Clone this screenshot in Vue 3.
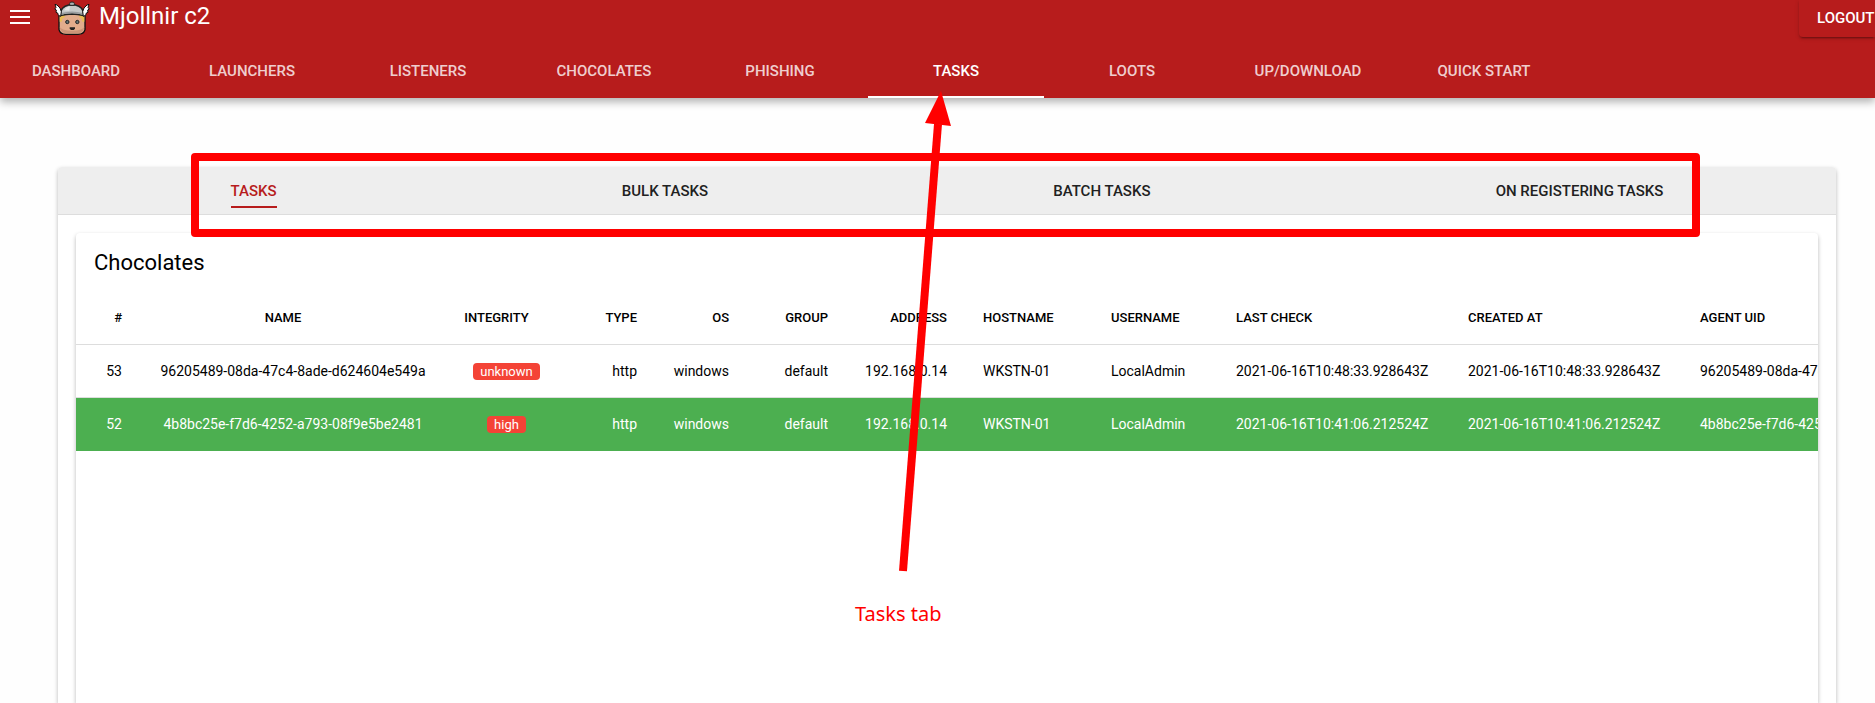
<script setup>
const navTabs = ['Dashboard', 'Launchers', 'Listeners', 'Chocolates', 'Phishing', 'Tasks', 'Loots', 'Up/Download', 'Quick start']
const sections = ['Tasks', 'Bulk tasks', 'Batch tasks', 'On registering tasks']

const columns = [
  { key: 'id', label: '#', align: 'right' },
  { key: 'name', label: 'Name', align: 'center' },
  { key: 'integrity', label: 'Integrity', align: 'center' },
  { key: 'type', label: 'Type', align: 'right' },
  { key: 'os', label: 'OS', align: 'right' },
  { key: 'group', label: 'Group', align: 'right' },
  { key: 'address', label: 'Address', align: 'right' },
  { key: 'hostname', label: 'Hostname', align: 'left' },
  { key: 'username', label: 'Username', align: 'left' },
  { key: 'lastCheck', label: 'Last check', align: 'left' },
  { key: 'createdAt', label: 'Created at', align: 'left' },
  { key: 'uid', label: 'Agent UID', align: 'left' }
]

const shared = { type: 'http', os: 'windows', group: 'default', address: '192.168.0.14', hostname: 'WKSTN-01', username: 'LocalAdmin' }
const rows = [
  {
    ...shared,
    id: 53,
    name: '96205489-08da-47c4-8ade-d624604e549a',
    integrity: 'unknown',
    lastCheck: '2021-06-16T10:48:33.928643Z',
    createdAt: '2021-06-16T10:48:33.928643Z',
    uid: '96205489-08da-47c4-8ade-d624604e549a'
  },
  {
    ...shared,
    id: 52,
    name: '4b8bc25e-f7d6-4252-a793-08f9e5be2481',
    integrity: 'high',
    lastCheck: '2021-06-16T10:41:06.212524Z',
    createdAt: '2021-06-16T10:41:06.212524Z',
    uid: '4b8bc25e-f7d6-4252-a793-08f9e5be2481',
    elevated: true
  }
]
</script>

<template>
  <div class="page">
    <header class="appbar">
      <div class="toolbar">
        <button class="menu" type="button" aria-label="Open menu">
          <svg width="20" height="14" viewBox="0 0 20 14" fill="#fff">
            <path d="M0 0h20v2H0zM0 6h20v2H0zM0 12h20v2H0z" />
          </svg>
        </button>
        <svg class="logo" width="36" height="34" viewBox="0 0 108 102" aria-hidden="true">
          <path d="M15 44 Q15 40 20 40 H88 Q93 40 93 45 V86 Q90 100 72 100 H36 Q18 100 15 86 Z" fill="#e2ac8c" stroke="#111" stroke-width="4" />
          <path d="M17 78 Q20 97 38 97 H70 Q88 97 91 78 Q84 89 54 89 Q24 89 17 78Z" fill="#cb9478" />
          <path d="M17 42h16l-2 8-5 2-3 10h-6zM91 42H75l2 8 5 2 3 10h6z" fill="#e9bd55" />
          <path d="M19 41 Q20 17 44 12 H64 Q88 17 89 41 V44 Q54 34 19 44Z" fill="#c6c8c8" stroke="#222" stroke-width="4" />
          <path d="M30 28 Q36 18 48 16 L46 29Z" fill="#e5e7e7" />
          <path d="M22 36 Q54 27 86 36 V41 Q54 33 22 41Z" fill="#999d9f" />
          <path d="M47 13V7q0-4 7-4t7 4v6z" fill="#aeb1b2" stroke="#222" stroke-width="3" />
          <path d="M3 10 9 12 18 21 22 32 20 46 13 43 11 36 6 34 7 27 2 24 6 20Z" fill="#fff" stroke="#111" stroke-width="3" />
          <path d="M105 10 99 12 90 21 86 32 88 46 95 43 97 36 102 34 101 27 106 24 102 20Z" fill="#fff" stroke="#111" stroke-width="3" />
          <circle cx="40" cy="63" r="5" fill="#677" stroke="#222" stroke-width="3" />
          <circle cx="70" cy="63" r="5" fill="#677" stroke="#222" stroke-width="3" />
          <path d="M47 79h16v4l-4 4h-8l-4-4z" fill="#222" />
        </svg>
        <span class="brand">Mjollnir c2</span>
        <button class="logout" type="button">LOGOUT</button>
      </div>
      <nav class="nav">
        <a v-for="tab in navTabs" :key="tab" href="#" :class="{ current: tab === 'Tasks' }">{{ tab.toUpperCase() }}</a>
      </nav>
    </header>

    <main class="panel">
      <div class="sections">
        <a v-for="(item, i) in sections" :key="item" href="#" :class="{ current: i === 0 }">{{ item.toUpperCase() }}</a>
      </div>
      <section class="card">
        <h1>Chocolates</h1>
        <table>
          <colgroup>
            <col v-for="col in columns" :key="col.key" :class="'col-' + col.key">
          </colgroup>
          <thead>
            <tr>
              <th v-for="col in columns" :key="col.key" scope="col" :class="col.align">{{ col.label.toUpperCase() }}</th>
            </tr>
          </thead>
          <tbody>
            <tr v-for="row in rows" :key="row.id" :class="{ elevated: row.elevated }">
              <td v-for="col in columns" :key="col.key" :class="col.align">
                <span v-if="col.key === 'integrity'" class="badge">{{ row.integrity }}</span>
                <template v-else>{{ row[col.key] }}</template>
              </td>
            </tr>
          </tbody>
        </table>
      </section>
    </main>

    <svg class="marks" width="1875" height="703" viewBox="0 0 1875 703" aria-hidden="true">
      <rect x="195" y="157" width="1501" height="76" fill="none" stroke="#f00" stroke-width="8" stroke-linejoin="round" />
      <path d="M938 124 903 571" stroke="#f00" stroke-width="8" />
      <path d="M941 91 925 123 951 126Z" fill="#f00" />
    </svg>
    <span class="note">Tasks tab</span>
  </div>
</template>

<style>
body {
  margin: 0;
  background: #fefefe;
}
</style>

<style scoped>
.page {
  position: relative;
  display: flex;
  flex-direction: column;
  min-height: 100vh;
  overflow: hidden;
  font-family: Roboto, "Liberation Sans", sans-serif;
  color: #000;
}
.page *,
.page {
  box-sizing: border-box;
}
a {
  text-decoration: none;
}
button {
  border: 0;
  padding: 0;
  font-family: inherit;
  background: none;
}
.appbar {
  background: #b71c1c;
  color: #fff;
  box-shadow: 0 4px 8px rgba(0, 0, 0, 0.3);
}
.toolbar {
  display: flex;
  align-items: flex-start;
  height: 44px;
  padding-left: 10px;
}
.menu {
  display: flex;
  padding-top: 10px;
}
.logo {
  margin: 1px 9px 0 24px;
}
.brand {
  font-size: 24px;
  line-height: 32px;
}
.logout {
  height: 37px;
  width: 76px;
  margin-left: auto;
  padding-left: 18px;
  border-radius: 0 0 0 4px;
  color: #fff;
  font-size: 15px;
  font-weight: 500;
  line-height: 35px;
  text-align: left;
  background: #b71c1c;
  box-shadow: 0 3px 1px -2px rgba(0, 0, 0, 0.2), 0 2px 2px rgba(0, 0, 0, 0.14), 0 1px 5px rgba(0, 0, 0, 0.12);
}
.nav {
  display: flex;
  height: 54px;
  margin-left: -12px;
}
.nav a {
  flex: 0 0 176px;
  padding-top: 2px;
  border-bottom: 2px solid transparent;
  color: rgba(255, 255, 255, 0.8);
  font-size: 15px;
  font-weight: 500;
  line-height: 50px;
  text-align: center;
}
.nav a.current {
  color: #fff;
  border-bottom-color: #fff;
}
.panel {
  display: flex;
  flex: 1;
  flex-direction: column;
  margin: 69px 39px 0 58px;
  border-radius: 4px 4px 0 0;
  background: #fff;
  box-shadow: 0 2px 4px rgba(0, 0, 0, 0.28);
}
.sections {
  display: flex;
  align-items: flex-start;
  justify-content: space-around;
  height: 48px;
  padding-top: 9px;
  border-bottom: 1px solid #ddd;
  border-radius: 4px 4px 0 0;
  background: #eee;
}
.sections a {
  height: 32px;
  border-bottom: 2px solid transparent;
  color: #212121;
  font-size: 15px;
  font-weight: 500;
  line-height: 30px;
}
.sections a.current {
  color: #b71c1c;
  border-bottom-color: #b71c1c;
}
.card {
  flex: 1;
  margin: 18px 18px 0;
  border-radius: 4px 4px 0 0;
  overflow: hidden;
  background: #fff;
  box-shadow: 0 2px 4px rgba(0, 0, 0, 0.28);
}
h1 {
  margin: 0;
  padding: 14px 18px 0;
  font-size: 22px;
  font-weight: 400;
  line-height: 32px;
}
table {
  width: 1912px;
  margin-top: 11px;
  table-layout: fixed;
  border-spacing: 0;
}
.col-id { width: 64px; }
.col-name { width: 306px; }
.col-integrity { width: 121px; }
.col-type { width: 88px; }
.col-os { width: 92px; }
.col-group { width: 99px; }
.col-address { width: 119px; }
.col-hostname { width: 128px; }
.col-username { width: 125px; }
.col-lastCheck { width: 232px; }
.col-createdAt { width: 232px; }
th,
td {
  padding: 0 18px;
  border-bottom: 1px solid #ddd;
  white-space: nowrap;
}
th {
  height: 55px;
  font-size: 13px;
  font-weight: 500;
}
td {
  height: 53px;
  font-size: 14px;
}
.left { text-align: left; }
.right { text-align: right; }
.center { text-align: center; }
/* Room for the sort arrow that follows a centred heading */
th.center {
  padding-right: 38px;
}
.elevated td {
  color: #fff;
  border-bottom-color: #4caf50;
  background: #4caf50;
}
.badge {
  display: inline-block;
  padding: 0 7px;
  border-radius: 4px;
  color: #fff;
  font-size: 13px;
  line-height: 17px;
  background: #f44336;
}
.marks {
  position: absolute;
  top: 0;
  left: 0;
  pointer-events: none;
}
.note {
  position: absolute;
  top: 600px;
  left: 855px;
  color: #f00;
  font-family: "Noto Sans", sans-serif;
  font-size: 20px;
  line-height: 28px;
}
</style>
